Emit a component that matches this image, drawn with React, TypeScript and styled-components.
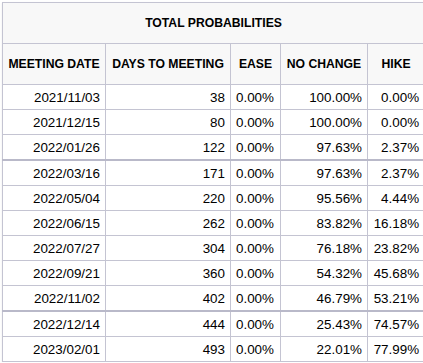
import styled, { createGlobalStyle } from "styled-components";

type Row = {
  date: string;
  days: number;
  ease: string;
  noChange: string;
  hike: string;
  divider?: boolean;
};

const rows: Row[] = [
  { date: "2021/11/03", days: 38, ease: "0.00%", noChange: "100.00%", hike: "0.00%" },
  { date: "2021/12/15", days: 80, ease: "0.00%", noChange: "100.00%", hike: "0.00%" },
  { date: "2022/01/26", days: 122, ease: "0.00%", noChange: "97.63%", hike: "2.37%", divider: true },
  { date: "2022/03/16", days: 171, ease: "0.00%", noChange: "97.63%", hike: "2.37%" },
  { date: "2022/05/04", days: 220, ease: "0.00%", noChange: "95.56%", hike: "4.44%" },
  { date: "2022/06/15", days: 262, ease: "0.00%", noChange: "83.82%", hike: "16.18%" },
  { date: "2022/07/27", days: 304, ease: "0.00%", noChange: "76.18%", hike: "23.82%" },
  { date: "2022/09/21", days: 360, ease: "0.00%", noChange: "54.32%", hike: "45.68%" },
  { date: "2022/11/02", days: 402, ease: "0.00%", noChange: "46.79%", hike: "53.21%", divider: true },
  { date: "2022/12/14", days: 444, ease: "0.00%", noChange: "25.43%", hike: "74.57%" },
  { date: "2023/02/01", days: 493, ease: "0.00%", noChange: "22.01%", hike: "77.99%" },
];

const colWidths = [103, 125, 50, 87, 57];

const GlobalStyle = createGlobalStyle`
  html, body {
    margin: 0;
    padding: 0;
    background: #ffffff;
    overflow: hidden;
  }
  body {
    font-family: "Liberation Sans", Arial, sans-serif;
    color: #000;
  }
`;

const Page = styled.div`
  padding: 2px 0 0 2px;
`;

const Table = styled.table`
  width: 422px;
  table-layout: fixed;
  border-collapse: collapse;
  box-shadow: 0 1px 2px rgba(0, 0, 0, 0.08);
`;

const HeadCell = styled.th<{ $tall?: boolean }>`
  height: 40px;
  padding: 0 5px;
  background: #f8f8f8;
  border: 1px solid #c4c4d2;
  font-size: 12.2px;
  font-weight: 700;
  text-align: center;
  white-space: nowrap;
  color: #000;
`;

const BodyRow = styled.tr<{ $divider?: boolean }>`
  border-bottom: ${(p) => (p.$divider ? "2px solid #b9b9c9" : "1px solid #c4c4d2")};
`;

const Cell = styled.td<{ $align?: "left" | "right" }>`
  height: 24px;
  padding: 0 5px 0 5px;
  border-left: 1px solid #c4c4d2;
  border-right: 1px solid #c4c4d2;
  font-size: 13.4px;
  text-align: ${(p) => p.$align ?? "right"};
  white-space: nowrap;
  background: #ffffff;
`;

export default function App() {
  return (
    <Page>
      <GlobalStyle />
      <Table>
        <colgroup>
          {colWidths.map((w, i) => (
            <col key={i} style={{ width: w }} />
          ))}
        </colgroup>
        <thead>
          <tr>
            <HeadCell colSpan={5}>TOTAL PROBABILITIES</HeadCell>
          </tr>
          <tr>
            <HeadCell>MEETING DATE</HeadCell>
            <HeadCell>DAYS TO MEETING</HeadCell>
            <HeadCell>EASE</HeadCell>
            <HeadCell>NO CHANGE</HeadCell>
            <HeadCell>HIKE</HeadCell>
          </tr>
        </thead>
        <tbody>
          {rows.map((r) => (
            <BodyRow key={r.date} $divider={r.divider}>
              <Cell>{r.date}</Cell>
              <Cell>{r.days}</Cell>
              <Cell $align="left">{r.ease}</Cell>
              <Cell>{r.noChange}</Cell>
              <Cell>{r.hike}</Cell>
            </BodyRow>
          ))}
        </tbody>
      </Table>
    </Page>
  );
}
